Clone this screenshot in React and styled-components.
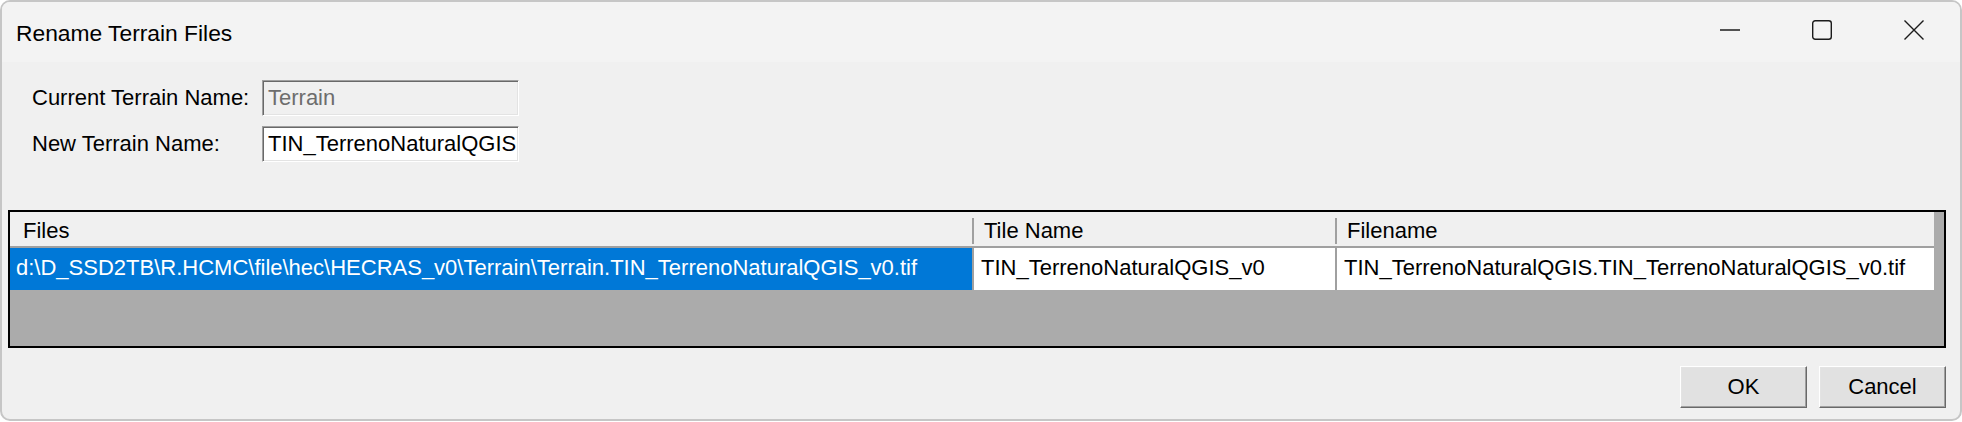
import React from 'react';
import styled, { createGlobalStyle } from 'styled-components';

const Global = createGlobalStyle`
  html, body { margin: 0; padding: 0; background: #ffffff; }
  body { font-family: "Liberation Sans", Arial, sans-serif; }
`;

const Window = styled.div`
  box-sizing: border-box;
  width: 1962px;
  height: 421px;
  border: 2px solid #c6c6c6;
  border-radius: 10px;
  background: #f0f0f0;
  display: flex;
  flex-direction: column;
  overflow: hidden;
`;

const TitleBar = styled.div`
  flex-shrink: 0;
  height: 60px;
  display: flex;
  align-items: flex-start;
  background: #f3f3f3;
`;

const Title = styled.div`
  flex: 1;
  padding: 17px 0 0 14px;
  font-size: 22.8px;
  color: #000;
  line-height: 28px;
`;

const CaptionButton = styled.div`
  width: 92px;
  height: 56px;
  display: flex;
  align-items: center;
  justify-content: center;
  color: #1b1b1b;
`;

const Body = styled.div`
  flex: 1;
  display: flex;
  flex-direction: column;
  padding: 18px 14px 0 6px;
`;

const Form = styled.div`
  display: grid;
  grid-template-columns: 230px 257px;
  grid-auto-rows: 36px;
  row-gap: 10px;
  padding-left: 24px;
  align-items: center;
`;

const Label = styled.div`
  font-size: 22px;
  color: #000;
  white-space: nowrap;
`;

const TextBox = styled.div`
  box-sizing: border-box;
  height: 36px;
  border: 1px solid;
  border-color: #a0a0a0 #ffffff #ffffff #a0a0a0;
  box-shadow: inset 1px 1px 0 #696969, inset -1px -1px 0 #e3e3e3;
  background: ${p => (p.disabled ? '#f0f0f0' : '#ffffff')};
  color: ${p => (p.disabled ? '#6d6d6d' : '#000000')};
  font-size: 22px;
  padding-left: 5px;
  display: flex;
  align-items: center;
  white-space: nowrap;
  overflow: hidden;
`;

const GridFrame = styled.div`
  box-sizing: border-box;
  margin-top: 48px;
  width: 1938px;
  height: 138px;
  border: 2px solid #000;
  background: #ababab;
`;

const COLS = '962px 363px 599px';

const HeaderRow = styled.div`
  display: grid;
  grid-template-columns: ${COLS};
  width: 1924px;
  height: 36px;
  box-sizing: border-box;
  background: #f0f0f0;
  border-bottom: 2px solid #a0a0a0;
`;

const HeaderCell = styled.div`
  position: relative;
  font-size: 22px;
  color: #000;
  padding: 3px 0 0 ${p => (p.first ? 13 : 12)}px;
  display: flex;
  align-items: center;
  white-space: nowrap;
  &::before {
    content: '';
    display: ${p => (p.first ? 'none' : 'block')};
    position: absolute;
    left: 0;
    top: 6px;
    bottom: 2px;
    width: 2px;
    background: #a0a0a0;
  }
`;

const DataRow = styled.div`
  display: grid;
  grid-template-columns: ${COLS};
  width: 1924px;
  height: 42px;
`;

const DataCell = styled.div`
  box-sizing: border-box;
  font-size: 22px;
  background: ${p => (p.selected ? '#0078d7' : '#ffffff')};
  color: ${p => (p.selected ? '#ffffff' : '#000000')};
  border-left: ${p => (p.first ? 'none' : '2px solid #a0a0a0')};
  padding-left: ${p => (p.first ? 6 : 7)}px;
  padding-bottom: 2px;
  display: flex;
  align-items: center;
  white-space: nowrap;
  overflow: hidden;
`;

const Footer = styled.div`
  display: flex;
  justify-content: flex-end;
  gap: 12px;
  margin-top: 18px;
`;

const Button = styled.div`
  box-sizing: border-box;
  width: 127px;
  height: 42px;
  background: #e1e1e1;
  border: 1px solid;
  border-color: #ffffff #696969 #696969 #ffffff;
  box-shadow: inset -1px -1px 0 #a0a0a0, inset 1px 1px 0 #e3e3e3;
  font-size: 22px;
  color: #000;
  display: flex;
  align-items: center;
  justify-content: center;
`;

const MinIcon = () => (
  <svg width="22" height="22" viewBox="0 0 22 22">
    <line x1="1" y1="11" x2="21" y2="11" stroke="currentColor" strokeWidth="1.4" />
  </svg>
);
const MaxIcon = () => (
  <svg width="22" height="22" viewBox="0 0 22 22">
    <rect x="1.7" y="1.7" width="18.6" height="18.6" rx="2.5" fill="none" stroke="currentColor" strokeWidth="1.4" />
  </svg>
);
const CloseIcon = () => (
  <svg width="22" height="22" viewBox="0 0 22 22">
    <path d="M1.5 1.5 L20.5 20.5 M20.5 1.5 L1.5 20.5" stroke="currentColor" strokeWidth="1.4" fill="none" />
  </svg>
);

export default function App() {
  return (
    <>
      <Global />
      <Window>
        <TitleBar>
          <Title>Rename Terrain Files</Title>
          <CaptionButton><MinIcon /></CaptionButton>
          <CaptionButton><MaxIcon /></CaptionButton>
          <CaptionButton><CloseIcon /></CaptionButton>
        </TitleBar>
        <Body>
          <Form>
            <Label>Current Terrain Name:</Label>
            <TextBox disabled>Terrain</TextBox>
            <Label>New Terrain Name:</Label>
            <TextBox>TIN_TerrenoNaturalQGIS</TextBox>
          </Form>
          <GridFrame>
            <HeaderRow>
              <HeaderCell first>Files</HeaderCell>
              <HeaderCell>Tile Name</HeaderCell>
              <HeaderCell>Filename</HeaderCell>
            </HeaderRow>
            <DataRow>
              <DataCell first selected>d:\D_SSD2TB\R.HCMC\file\hec\HECRAS_v0\Terrain\Terrain.TIN_TerrenoNaturalQGIS_v0.tif</DataCell>
              <DataCell>TIN_TerrenoNaturalQGIS_v0</DataCell>
              <DataCell>TIN_TerrenoNaturalQGIS.TIN_TerrenoNaturalQGIS_v0.tif</DataCell>
            </DataRow>
          </GridFrame>
          <Footer>
            <Button>OK</Button>
            <Button>Cancel</Button>
          </Footer>
        </Body>
      </Window>
    </>
  );
}
